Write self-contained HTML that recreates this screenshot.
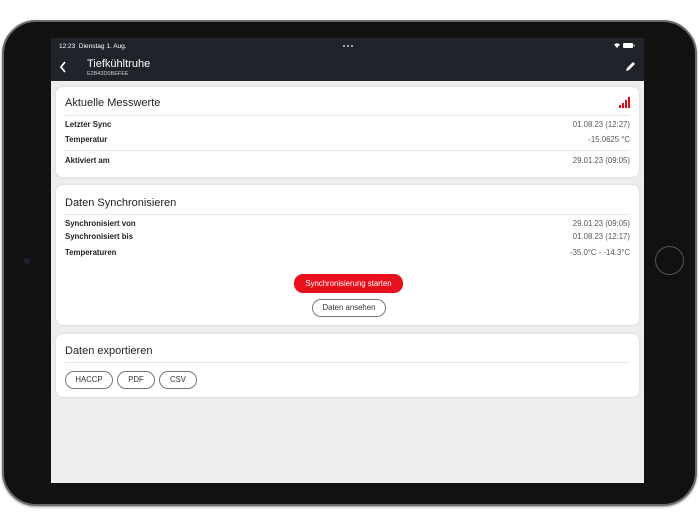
<!DOCTYPE html>
<html><head><meta charset="utf-8"><style>
*{margin:0;padding:0;box-sizing:border-box}
body{width:700px;height:525px;background:#fff;font-family:"Liberation Sans",sans-serif;position:relative;overflow:hidden}
.dev{position:absolute;left:2px;top:20px;width:695px;height:486px;border-radius:34px;background:#111;border:2px solid #6a6a6a;box-shadow:0 1px 2px #999}
.screen{position:absolute;left:51px;top:38px;width:593px;height:445px;background:#ededed;overflow:hidden}
.hdr{position:absolute;left:0;top:0;width:593px;height:43px;background:#1f242b;color:#fff}
.card{position:absolute;left:5px;width:583px;background:#fff;border-radius:7px;box-shadow:0 0 2px #ccc}
.t{position:absolute;left:9px;font-size:11px;color:#222}
.row{position:absolute;left:9px;right:9px;font-size:7.8px;color:#222;display:flex;justify-content:space-between}
.row b{font-weight:bold}
.row span:last-child{color:#555}
.line{position:absolute;left:9px;right:9px;height:1px;background:#e6e6e6}
.btn{position:absolute;height:18px;border:1px solid #777;border-radius:9px;font-size:7.8px;color:#333;text-align:center;line-height:16px;background:#fff}
.dot{position:absolute;top:7px;width:2px;height:2px;border-radius:1px;background:#ccc}
</style></head><body>
<div class="dev"></div>
<div style="position:absolute;left:24px;top:258px;width:6px;height:6px;border-radius:3px;background:#1c2230"></div>
<div style="position:absolute;left:655px;top:246px;width:29px;height:29px;border-radius:50%;border:1.5px solid #555;background:#111"></div>
<div class="screen">
 <div class="hdr">
  <div style="position:absolute;left:8px;top:5px;font-size:6.5px">12:23&nbsp; Dienstag 1. Aug.</div>
  <div class="dot" style="left:292px"></div><div class="dot" style="left:296px"></div><div class="dot" style="left:300px"></div>
  <svg style="position:absolute;left:562px;top:4px" width="22" height="7"><path d="M1 2.5Q4 0 7 2.5L4 6Z" fill="#fff"/><rect x="10" y="1" width="10" height="5" rx="1" fill="#fff"/><rect x="20.5" y="2.5" width="1" height="2" fill="#fff"/></svg>
  <svg style="position:absolute;left:8px;top:23px" width="8" height="12"><path d="M6 1L2 6L6 11" stroke="#fff" stroke-width="1.8" fill="none"/></svg>
  <div style="position:absolute;left:36px;top:20px;font-size:11px">Tiefkühltruhe</div>
  <div style="position:absolute;left:36px;top:33px;font-size:5.5px;color:#ccc">E2B43D0BEFEE</div>
  <svg style="position:absolute;left:574px;top:23px" width="11" height="11"><path d="M1 10L2 7L8 1L10 3L4 9Z" fill="#fff"/></svg>
 </div>
 <div class="card" style="top:49px;height:90px">
  <div class="t" style="top:10px">Aktuelle Messwerte</div>
  <svg style="position:absolute;left:563px;top:9px" width="13" height="13"><rect x="0" y="9" width="2" height="3" fill="#e30613"/><rect x="3" y="7" width="2" height="5" fill="#e30613"/><rect x="6" y="4" width="2" height="8" fill="#e30613"/><rect x="9" y="1" width="2" height="11" fill="#e30613"/></svg>
  <div class="line" style="top:28px"></div>
  <div class="row" style="top:33px"><b>Letzter Sync</b><span>01.08.23 (12:27)</span></div>
  <div class="row" style="top:48px"><b>Temperatur</b><span>-15.0625 °C</span></div>
  <div class="line" style="top:63px"></div>
  <div class="row" style="top:69px"><b>Aktiviert am</b><span>29.01.23 (09:05)</span></div>
 </div>
 <div class="card" style="top:147px;height:140px">
  <div class="t" style="top:12px">Daten Synchronisieren</div>
  <div class="line" style="top:29px"></div>
  <div class="row" style="top:34px"><b>Synchronisiert von</b><span>29.01.23 (09:05)</span></div>
  <div class="row" style="top:47px"><b>Synchronisiert bis</b><span>01.08.23 (12:17)</span></div>
  <div class="row" style="top:63px"><b>Temperaturen</b><span>-35.0°C - -14.3°C</span></div>
  <div class="btn" style="left:238px;top:89px;width:109px;background:#e8101c;border-color:#e8101c;color:#fff;height:19px;line-height:18px">Synchronisierung starten</div>
  <div class="btn" style="left:256px;top:114px;width:74px">Daten ansehen</div>
 </div>
 <div class="card" style="top:296px;height:63px">
  <div class="t" style="top:11px">Daten exportieren</div>
  <div class="line" style="top:28px"></div>
  <div class="btn" style="left:9px;top:37px;width:48px">HACCP</div>
  <div class="btn" style="left:61px;top:37px;width:38px">PDF</div>
  <div class="btn" style="left:103px;top:37px;width:38px">CSV</div>
 </div>
</div>
</body></html>
